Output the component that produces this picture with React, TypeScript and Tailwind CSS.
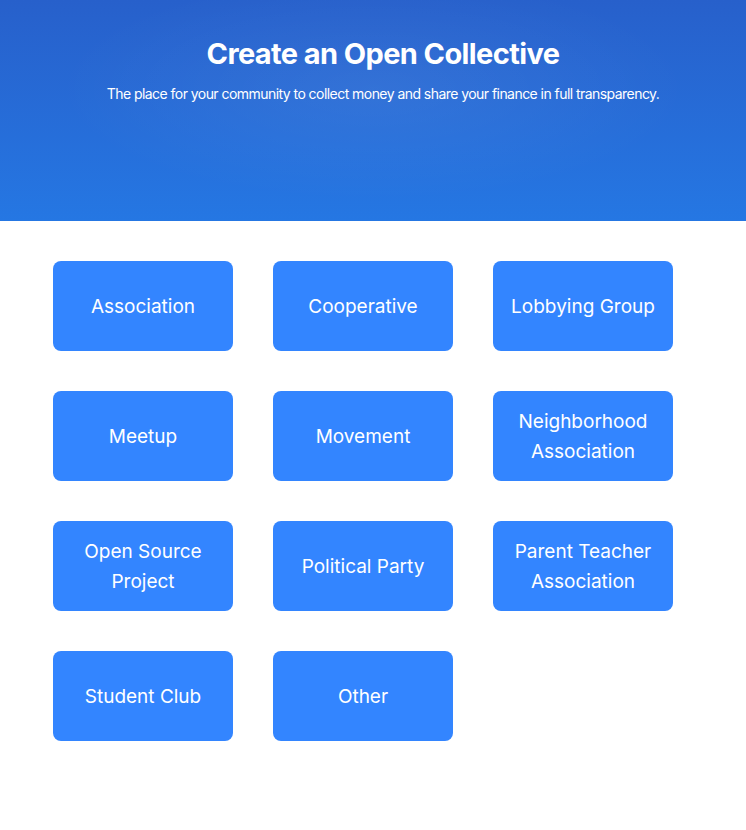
const types = [
  "Association",
  "Cooperative",
  "Lobbying Group",
  "Meetup",
  "Movement",
  "Neighborhood Association",
  "Open Source Project",
  "Political Party",
  "Parent Teacher Association",
  "Student Club",
  "Other",
];

export default function App() {
  return (
    <div className="min-h-[830px] bg-white" style={{ fontFamily: "Inter, 'Noto Sans', sans-serif" }}>
      <header className="relative h-[221px] overflow-hidden bg-gradient-to-b from-[#2760cb] to-[#2577e3]">
        <div className="absolute inset-0 bg-[radial-gradient(ellipse_at_50%_40%,rgba(255,255,255,0.06),transparent_60%)]" />
        <div className="relative flex flex-col items-center pl-5 pt-[35px] text-white">
          <h1 className="text-[29px] font-bold leading-[38px] tracking-[-0.6px]">Create an Open Collective</h1>
          <p className="mt-[11px] text-[14px] leading-5 tracking-[-0.55px]">
            The place for your community to collect money and share your finance in full transparency.
          </p>
        </div>
      </header>
      <main className="pl-[53px] pt-10 pb-10">
        <div className="grid w-[620px] grid-cols-[180px_180px_180px] gap-10">
          {types.map((t) => (
            <button
              key={t}
              className="flex h-[90px] w-[180px] items-center justify-center rounded-lg bg-[#3385ff] px-3 pt-[2px] text-center text-[19px] leading-[30px] text-white"
            >
              {t}
            </button>
          ))}
        </div>
      </main>
    </div>
  );
}
